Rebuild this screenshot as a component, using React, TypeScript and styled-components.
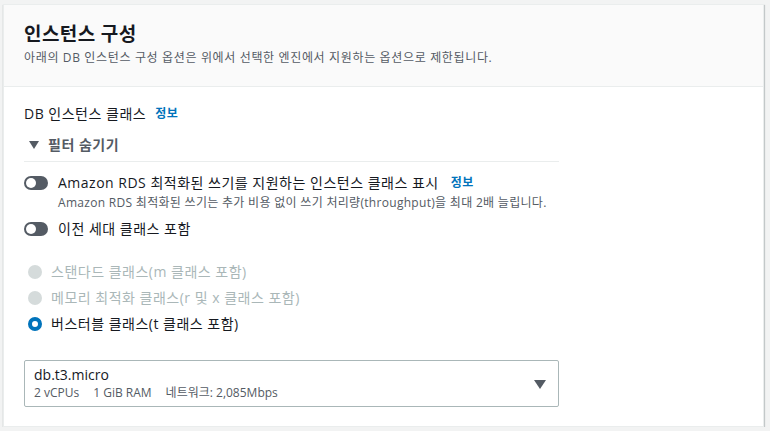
import { FC } from "react";
import styled, { createGlobalStyle } from "styled-components";

const GlobalStyle = createGlobalStyle`
  body {
    margin: 0;
    background: #f2f3f3;
    font-family: "Open Sans", "Noto Sans CJK KR", sans-serif;
    color: #16191f;
  }
`;

const Page = styled.div`
  padding: 4px 6px 0 3px;
`;

const Card = styled.section`
  background: #fff;
  border: 1px solid #eaeded;
  box-shadow: 0 1px 1px 0 rgba(0, 28, 36, 0.3), 1px 1px 1px 0 rgba(0, 28, 36, 0.15);
  height: 423px;
  box-sizing: border-box;
`;

const Header = styled.header`
  background: #fafafa;
  border-bottom: 1px solid #eaeded;
  padding: 18px 20px 20px;
`;

const Title = styled.h2`
  margin: 0;
  font-size: 19px;
  line-height: 22px;
  font-weight: 700;
  letter-spacing: 0.4px;
`;

const Description = styled.p`
  margin: 5px 0 0;
  font-size: 12px;
  line-height: 16px;
  letter-spacing: 0.65px;
  color: #545b64;
`;

const Body = styled.div`
  padding: 17px 20px 0 20px;
  letter-spacing: 0.5px;
`;

const Label = styled.div`
  font-size: 14px;
  line-height: 20px;
  display: flex;
  gap: 9px;
`;

const InfoLink = styled.span`
  color: #0073bb;
  font-weight: 700;
  font-size: 12px;
`;

const FilterToggle = styled.div`
  width: 535px;
  box-sizing: border-box;
  margin-top: 11px;
  padding: 0 0 6px 5px;
  border-bottom: 1px solid #eaeded;
  display: flex;
  align-items: center;
  gap: 9px;
  font-size: 14px;
  line-height: 20px;
  font-weight: 700;
  color: #545b64;
`;

const Caret = styled.span`
  width: 0;
  height: 0;
  border-left: 5px solid transparent;
  border-right: 5px solid transparent;
  border-top: 8px solid #545b64;
`;

const ToggleRow = styled.div<{ $top: number }>`
  display: flex;
  align-items: flex-start;
  gap: 10px;
  margin-top: ${(p) => p.$top}px;
`;

const Switch = styled.span`
  flex: none;
  width: 24px;
  height: 14px;
  margin-top: 3px;
  border-radius: 7px;
  background: #545b64;
  position: relative;
  &::after {
    content: "";
    position: absolute;
    left: 2px;
    top: 2px;
    width: 10px;
    height: 10px;
    border-radius: 50%;
    background: #fff;
  }
`;

const ToggleText = styled.div`
  font-size: 14px;
  line-height: 20px;
  display: flex;
  flex-direction: column;
  gap: 2px;
`;

const ToggleTitle = styled.div`
  display: flex;
  align-items: center;
  gap: 12px;
`;

const Hint = styled.div`
  font-size: 12px;
  line-height: 16px;
  letter-spacing: 0.3px;
  color: #545b64;
`;

const RadioGroup = styled.div`
  margin-top: 23px;
  display: flex;
  flex-direction: column;
  gap: 6px;
`;

const RadioRow = styled.div<{ $disabled?: boolean }>`
  display: flex;
  align-items: center;
  gap: 9px;
  padding-left: 4px;
  font-size: 14px;
  line-height: 20px;
  color: ${(p) => (p.$disabled ? "#aab7b8" : "#16191f")};
`;

const Radio = styled.span<{ $checked?: boolean }>`
  width: 14px;
  height: 14px;
  border-radius: 50%;
  box-sizing: border-box;
  background: ${(p) => (p.$checked ? "#fff" : "#d5dbdb")};
  border: ${(p) => (p.$checked ? "4px solid #0073bb" : "none")};
`;

const Select = styled.div`
  margin-top: 26px;
  width: 535px;
  height: 47px;
  box-sizing: border-box;
  border: 1px solid #aab7b8;
  border-radius: 2px;
  padding: 4px 12px 0 9px;
  display: flex;
  align-items: center;
  justify-content: space-between;
  letter-spacing: 0;
`;

const SelectValue = styled.div`
  display: flex;
  flex-direction: column;
  align-self: flex-start;
`;

const SelectMain = styled.div`
  font-size: 14px;
  line-height: 20px;
`;

const SelectMeta = styled.div`
  font-size: 12px;
  line-height: 16px;
  color: #545b64;
  display: flex;
  gap: 14px;
`;

const SelectCaret = styled(Caret)`
  border-left-width: 6px;
  border-right-width: 6px;
  border-top-width: 9px;
  margin-top: -2px;
`;

const App: FC = () => {
  return (
    <>
      <GlobalStyle />
      <Page>
        <Card>
          <Header>
            <Title>인스턴스 구성</Title>
            <Description>
              아래의 DB 인스턴스 구성 옵션은 위에서 선택한 엔진에서 지원하는 옵션으로 제한됩니다.
            </Description>
          </Header>
          <Body>
            <Label>
              DB 인스턴스 클래스 <InfoLink>정보</InfoLink>
            </Label>
            <FilterToggle>
              <Caret />
              필터 숨기기
            </FilterToggle>
            <ToggleRow $top={11}>
              <Switch />
              <ToggleText>
                <ToggleTitle>
                  Amazon RDS 최적화된 쓰기를 지원하는 인스턴스 클래스 표시
                  <InfoLink>정보</InfoLink>
                </ToggleTitle>
                <Hint>
                  Amazon RDS 최적화된 쓰기는 추가 비용 없이 쓰기 처리량(throughput)을 최대 2배 늘립니다.
                </Hint>
              </ToggleText>
            </ToggleRow>
            <ToggleRow $top={8}>
              <Switch />
              <ToggleText>이전 세대 클래스 포함</ToggleText>
            </ToggleRow>
            <RadioGroup>
              <RadioRow $disabled>
                <Radio />
                스탠다드 클래스(m 클래스 포함)
              </RadioRow>
              <RadioRow $disabled>
                <Radio />
                메모리 최적화 클래스(r 및 x 클래스 포함)
              </RadioRow>
              <RadioRow>
                <Radio $checked />
                버스터블 클래스(t 클래스 포함)
              </RadioRow>
            </RadioGroup>
            <Select>
              <SelectValue>
                <SelectMain>db.t3.micro</SelectMain>
                <SelectMeta>
                  <span>2 vCPUs</span>
                  <span>1 GiB RAM</span>
                  <span>네트워크: 2,085Mbps</span>
                </SelectMeta>
              </SelectValue>
              <SelectCaret />
            </Select>
          </Body>
        </Card>
      </Page>
    </>
  );
};

export default App;
